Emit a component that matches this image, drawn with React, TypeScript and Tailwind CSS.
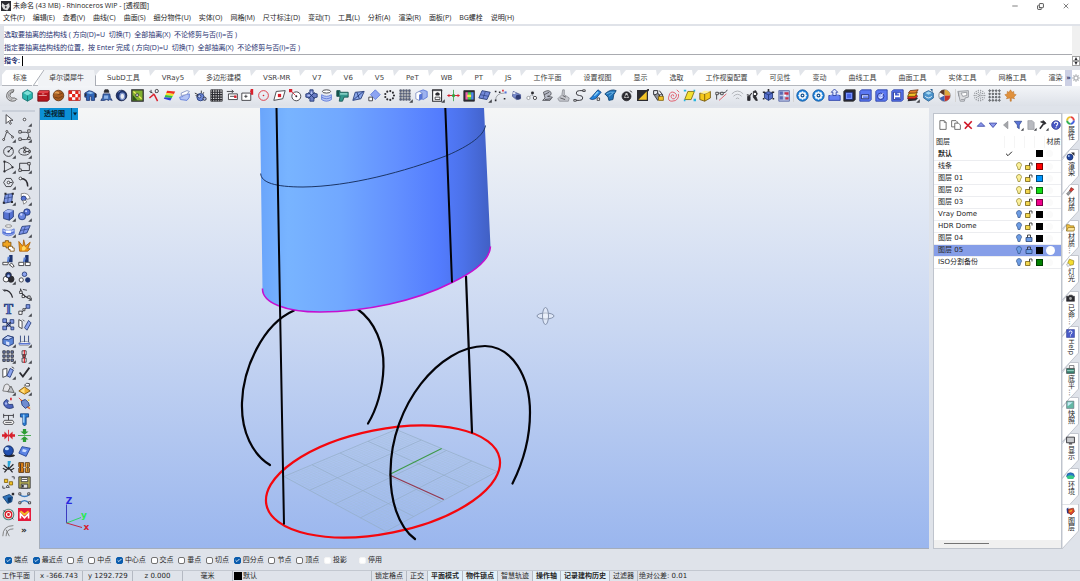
import { useState } from 'react';
import type { ReactNode } from 'react';
import { Check, Copy, Minus, X } from 'lucide-react';
import clsx from 'clsx';

// fill, stroke, path data, stroke width
type Shape = [string, string, string, number?];
type Glyph = { name: string; shapes: Shape[]; more?: boolean };

const N = 'none';
const K = '#2b2b30';
const G = '#8d9096';
const B = '#5674d6';
const L = '#b4c4f5';
const D = '#1d3470';
const R = '#d8202c';
const Y = '#f2c327';
const W = '#ffffff';

const c = (x: number, y: number, r: number) =>
  `M${x - r} ${y}a${r} ${r} 0 1 0 ${r * 2} 0a${r} ${r} 0 1 0 ${-r * 2} 0z`;

const e = (x: number, y: number, rx: number, ry: number) =>
  `M${x - rx} ${y}a${rx} ${ry} 0 1 0 ${rx * 2} 0a${rx} ${ry} 0 1 0 ${-rx * 2} 0z`;

const sq = (x: number, y: number, s: number) => `M${x} ${y}h${s}v${s}h${-s}z`;

const dots = (n: number, start: number, step: number, s: number) => {
  let d = '';
  for (let i = 0; i < n; i++)
    for (let j = 0; j < n; j++) d += sq(start + i * step, start + j * step, s);
  return d;
};

const ring = (n: number, r: number, s: number) => {
  let d = '';
  for (let i = 0; i < n; i++) {
    const a = (i * 2 * Math.PI) / n;
    d += c(8 + r * Math.cos(a), 8 + r * Math.sin(a), s);
  }
  return d;
};

const mainTools: Glyph[] = [
  { name: 'Sweep', shapes: [['#d4d5d8', '#666', 'M11 1C1 0-2 14 9 15q4 0 5-2l-2-2q-5 1-6-3 0-4 4-4z', 1.2], [N, '#888', 'M10 3C3 3 2 12 9 13M13 11l2 2']] },
  { name: 'Polyhedron', shapes: [['#2bb5ad', '#14706e', 'M8 1l6 3.5v7L8 15l-6-3.5v-7z'], ['#7fe0d8', N, 'M8 2l5 3-5 3-5-3z'], [N, '#14706e', 'M8 8v7']] },
  { name: 'Toolbox', shapes: [['#b5141c', '#6d0c12', 'M1 5l2-3h12v11l-2 2H1z'], ['#e04048', N, 'M1 5l2-3h12l-2 3z'], [N, '#f0b0b0', 'M2 8h10M6 6h3']] },
  { name: 'Wood sphere', shapes: [['#a85a1e', '#5e3210', c(8, 8, 6.5)], ['#e09a50', N, e(6, 5, 3, 2)], [N, '#6e3c14', 'M3 10q5 3 10-1M4 6q5 2 9-1']] },
  { name: 'Checker', shapes: [[W, '#991111', 'M1 2h14v12H1z'], ['#e02418', N, 'M1 2h4v4H1zM9 2h4v4H9zM5 6h4v4H5zM12 6h3v4h-3zM1 10h4v4H1zM9 10h4v4H9z']] },
  { name: 'Folded block', shapes: [['#2f66b8', D, 'M1 5l5-3 4 1 5 3v4h-2v4H9V9H7v5H3v-4H1z'], ['#8fc0ee', N, 'M3 5l4-2 5 2-4 1z'], [K, N, 'M1 6l2-1v4H1zM13 5l2 1v4h-2z']] },
  { name: 'Drape', shapes: [['#3c6cb4', D, 'M1 14q3-3 3-8h8q0 5 3 8l-3-1-1 1-3-1-3 1z'], [K, K, 'M6 1h4l1 3H5z'], ['#8fb4e8', N, 'M5 8h5v4H5z']] },
  { name: 'Torus', shapes: [[D, '#101a40', e(8, 8, 6.5, 6.5)], ['#e8ecf4', '#7a90c8', e(9, 9, 3, 4), 1.5], [N, '#8098d0', 'M4 4l3-2']] },
  { name: 'Picture curve', shapes: [['#80b030', K, sq(1, 1, 14), 1.5], ['#2e5518', N, 'M2 14V7l6 7z'], [N, '#f2ec60', 'M3 3l10 9', 1.5], ['#fff', K, 'M6 6h3v3H6z']] },
  { name: 'Cut curve', shapes: [[N, R, 'M9 6l-6 5M9 7l4 8', 1.8], [N, K, c(12, 2.5, 2)], [N, K, 'M5 1v4M3 3l4 2M10 5l1-1']] },
  { name: 'Curvature map', shapes: [['#f03020', N, 'M5 2l10 1-1.5 3L4 5z'], ['#f5e028', N, 'M4 5l9.5 1-1.3 2.5L3 7.5z'], ['#30c040', N, 'M3 7.5l9 1-1.3 2.5L2 10z'], ['#3040d8', N, 'M2 10l8.800 1L9 14 1 12z']] },
  { name: 'Surface offset', shapes: [[L, B, 'M2 10q5 0 6-3l6-1q1 5-3 8l-8-1z'], [W, '#7b8bc0', 'M4 5l7-3 3 1-4 4-6 1z']] },
  { name: 'Gears', shapes: [['#6e88d8', D, c(8, 10, 4.5)], ['#bfcdf5', D, c(6.5, 9, 2)], [N, K, 'M1 5l4 2M2 8l3 1M9 2v3M12 4l-1 2', 1.1], ['#9fb0e8', K, c(13, 12, 2)]] },
  { name: 'Weave', shapes: [['#e0e0e0', K, sq(1, 1, 14)], [N, K, 'M1 4h14M1 7h14M1 10h14M1 13h14M3 1v14M6 1v14M9 1v14M12 1v14', 1.4]] },
  { name: 'Unroll', shapes: [[W, K, 'M3 6h11v7H3z'], [N, K, 'M5 9h7M1 3h8M7 1l2 2-2 2'], [R, N, sq(10, 8, 3)]] },
  { name: 'Corner', shapes: [[W, K, 'M1 5h11v9H1z'], [R, N, 'M12 0h3v7h-3V4h-1z'], [N, K, 'M4 9h4M6 7v4']] },
  { name: 'Circle points', shapes: [[N, R, c(8, 8, 6), 1], [R, N, c(8, 8, 1)]] },
  { name: 'Diamond point', shapes: [[W, K, 'M4 3l11-1-3 10-11 2z'], [R, N, sq(6, 6, 4)]] },
  { name: 'Tangent circle', shapes: [[W, K, c(9, 9, 5.5)], [N, R, 'M2 2l6 6'], [R, N, sq(0, 0, 4)], [K, N, c(9, 9, 1.2)]] },
  { name: 'Cross solid', shapes: [['#6a7cc4', D, 'M6 1h4v4l5 1v4l-4 1v4H6v-4l-5-1V6l5-1z'], [L, N, 'M7 3h2v3H7zM3 7h3v2H3z'], [N, D, 'M4 4l8 8M12 4l-8 8']] },
  { name: 'Ring stack', shapes: [[W, K, e(8, 3, 5, 2)], [L, B, 'M2 7v6q6 4 12 0V7q-6 4-12 0z'], [N, B, 'M2 10q6 4 12 0']] },
  { name: 'Pipe', shapes: [['#33978e', '#14504c', 'M1 2h4v2h10v6h-5l-2 5H4l1-6H1z'], ['#86d0c6', N, 'M5 5h9v2H5z'], ['#14504c', N, 'M1 2h3v7H1z']] },
  { name: 'Plane line', shapes: [['#8ba8ec', D, 'M4 4l11-1-4 9-10 2z'], [N, D, 'M2 13L14 3M6 4l3 8']] },
  { name: 'Rotate plane', shapes: [['#8ca4f2', B, 'M9 1l6 6-6 6-6-6z'], [W, K, sq(1, 10, 4.5)]] },
  { name: 'Polar array', shapes: [[K, N, ring(9, 5.5, 1.3)]] },
  { name: 'Rect array', shapes: [['#7185bd', K, dots(4, 1, 3.6, 2), 0.7]], more: true },
  { name: 'Boxes', shapes: [['#9db2f0', B, 'M5 3l5-2 5 2v7l-5 3-5-3z'], [W, '#7c8cc0', 'M1 5l4-2 4 2v7l-4 2-4-2z'], [B, N, 'M5 7l4-2v7l-4 2z']] },
];

const solidTools: Glyph[] = [
  { name: 'Figure', shapes: [[W, K, 'M2 1h11v14H2z', 1.3], [K, N, 'M5 6q3-4 6 0l-1 2H6z'], [N, K, 'M5 10h6v3H5zM1 2h13']], more: true },
  { name: 'Gumball', shapes: [[N, '#30a040', 'M8 1v14'], [N, R, 'M1 8h14', 1.3], [R, N, 'M0 8l3-2v4zM16 8l-3-2v4z'], ['#30a040', N, c(8, 8, 2)]] },
  { name: 'Environment map', shapes: [[K, K, sq(1, 2, 13)], ['#f060b0', N, 'M3 4h3v9H3z'], ['#44d050', N, 'M6 4h4v9H6z'], ['#5088f0', N, 'M10 4h3v9h-3z'], ['#f5e050', N, 'M5 7h5v3H5z']] },
  { name: 'Mesh plane', shapes: [['#7389d8', D, 'M5 2l10 2-4 9-10-2z'], [N, D, 'M3 7l10 2M9 3l-3 9', 0.7]], more: true },
  { name: 'Curve points', shapes: [[N, G, 'M2 14q0-9 11-9'], [K, N, 'M1 2h2v2H1zM6 3h2v2H6zM1 13h2v2H1zM12 11h2v2h-2z'], [R, N, sq(10, 1, 2)], [B, N, sq(13, 3, 2.5)]] },
  { name: 'Capsule', shapes: [['#7789ca', '#4a5890', 'M4 3l9 4v5l-5 1-5-4z'], ['#303c74', N, c(10, 10, 3)], [W, N, e(5, 5, 2, 1)]] },
  { name: 'Nodes', shapes: [[N, G, 'M2 12l5-5 6 5'], [W, K, c(11, 11, 2)], [W, G, c(3, 11, 2)], [K, N, c(8, 5, 1.8)]] },
  { name: 'Flow', shapes: [['#b8bcc8', K, 'M3 4q7-4 9 0t-4 5l6 1-3 4H2l3-3z', 0.8], [N, K, 'M4 7l6-3M5 13l7-1', 0.8]] },
  { name: 'Robot', shapes: [['#c4c6cc', G, 'M7 1h2v6l6 4-1 4H3l-2-3 5-5z'], [N, K, 'M4 11l6 2M7 8l4 2', 0.8]] },
  { name: 'S curve', shapes: [[N, K, 'M14 2H8q-4 0-4 3t4 3t4 3t-4 3H2', 1.1], [W, K, 'M12 1h3v2h-3zM1 13h3v2H1z']] },
  { name: 'Brush', shapes: [['#2382dc', '#0b3d7a', 'M11 1l4 3-7 8-4 1-3-1 3-3z'], ['#8ad0f8', N, 'M10 3l2 1-5 5-1-1z'], [W, K, sq(10, 11, 3)]] },
  { name: 'Leaf', shapes: [['#2173b8', '#0d3f6e', 'M1 6q8-7 14-4l-3 5-1 6-5 1-1-4z'], [N, '#7cc0ec', 'M3 6q5-3 10-2M6 9l5-4']] },
  { name: 'Record', shapes: [[K, K, c(8, 9, 5.5)], ['#c8c8c8', N, 'M7 5h2l2 6H5z'], [K, N, c(8, 9, 1.5)], [N, K, 'M12 2l3 2']] },
  { name: 'Contrast', shapes: [[Y, K, sq(2, 2, 12), 1.5], [K, N, 'M2 2h12L2 14z'], [K, N, 'M13 0h3v3z']] },
  { name: 'Locks', shapes: [[N, K, 'M2 2h5v5H2zM9 2l4 5', 1.2], [G, K, 'M3 8l4-3 3 4-3 5z'], [Y, '#80600a', 'M8 9h6v5H8z'], [N, K, 'M9 9V7h4v2']] },
  { name: 'Spiral', shapes: [[N, '#e04858', 'M8 9q1-2-1-2t-2 2 2 3 4-2-1-5-5-1-3 6 4 5 7-3 1-6'], [N, '#e04858', 'M12 1l3 3']] },
  { name: 'Yellow plane', shapes: [['#f4e030', '#77650a', 'M6 3h8l-4 10H2z'], ['#28b4dc', N, 'M1 1h3v2H1zM13 12h3v3h-3zM1 13h2v2H1zM13 1h2v2h-2z']] },
  { name: 'Yellow box', shapes: [['#f4c81c', '#6b4f08', 'M1 5l6 1 7-3v8l-7 4-6-2z'], ['#fff3a0', N, 'M1 5l6-3 7 1-7 3z'], [N, '#6b4f08', 'M7 6v9']] },
  { name: 'Blend', shapes: [[N, K, 'M2 13V5h5q7 0 8-4'], [W, K, 'M1 4h3v3H1zM7 4h3v3H7z'], [N, R, 'M5 14L14 6', 0.8]] },
  { name: 'Waves', shapes: [[N, '#b0b3b8', 'M1 6q7-7 14 0M3 9q5-5 10 0M6 12q2-2 4 0', 1.2]] },
  { name: 'People', shapes: [[K, K, 'M2 9h3v5H2zM9 3l3-1 2 4-2 3 2 5h-2l-3-4z'], [W, N, c(11, 6, 1.5)], [N, K, 'M1 7l4 1 2-3', 1.3]] },
  { name: 'Cube frame', shapes: [['#5871cc', D, 'M3 5l5-2 5 2v6l-5 3-5-3z'], [N, D, 'M8 7v7M3 5l5 2 5-2'], [K, N, 'M1 3h3v2H1zM12 3h3v2h-3zM7 0h2v3H7zM1 11h2v2H1zM13 11h2v2h-2z']] },
  { name: 'Pattern', shapes: [['#b8c2e4', '#5060a0', sq(1, 2, 13)], ['#5a6cb4', N, 'M2 3h4v4H2zM2 9h4v4H2z'], ['#c83048', N, 'M8 4h5v3H8zM9 10h4v3H9z'], [W, N, 'M7 7h3v2H7z']] },
];

const gear: Shape[] = [['#1e86e0', '#0c4d94', c(8, 8, 7)], [W, N, ring(8, 4, 1.3)], [W, N, c(8, 8, 4)], ['#14508c', N, c(8, 8, 2.5)], [W, N, c(8, 8, 1)]];
const pad: Shape = ['#5b78f2', '#2339a0', 'M1 3l2-2h12v12l-2 2H1z'];

const panelTools: Glyph[] = [
  { name: 'Settings A', shapes: gear },
  { name: 'Settings B', shapes: gear },
  { name: 'Extrude', shapes: [['#6480f4', '#2339a0', 'M1 8h14v6H1z'], ['#a8bcff', N, 'M2 8l3-2h9l-1 2z'], ['#dfe8ff', '#2339a0', 'M8 0l4 4h-2v4H6V4H4z']] },
  { name: 'Frame', shapes: [[K, K, 'M1 3l2-2h12v12l-2 2H1z'], ['#7c96ff', '#101c60', sq(3, 4, 9)], ['#4763e4', N, sq(5, 6, 5)]] },
  { name: 'Slot', shapes: [pad, ['#c9d6ff', '#16205c', 'M3 7h9v5H3z'], ['#5b78f2', N, 'M5 9h6v2H5z']] },
  { name: 'Revolve hole', shapes: [pad, ['#93a8ff', '#1a2a80', c(7, 9, 4)], [N, W, 'M7 9l3-4M5 10q2 2 4 0']] },
  { name: 'Save block', shapes: [pad, [W, '#1a2a80', 'M3 4h9v9H3z'], ['#3d58cc', N, 'M5 4h5v4H5zM5 10h6v3H5z'], [W, N, sq(8, 5, 1.5)]] },
  { name: 'Layers stack', shapes: [[K, N, 'M3 11l9-1 3 1-3 3-10 1z'], ['#e03020', '#6a1010', 'M3 8l10-1 1 2-3 3H2z'], [Y, '#6b4f08', 'M4 5l10-1-3 5H2z'], ['#e8802a', '#6a3010', 'M5 2l10-1-3 4H3z']], more: true },
  { name: 'Hexagon', shapes: [['#4c94cc', '#2b6090', 'M8 2l6 3v6l-6 4-6-4V5z'], ['#a4d8f4', N, 'M8 3l4 2-4 2-4-2z'], [N, W, 'M4 9q4 4 8 0'], ['#2b6090', N, 'M10 0h3v4z']] },
  { name: 'Color wheel', shapes: [['#f2f2f6', '#777', c(8, 8, 7)], ['#e0a63a', N, 'M8 8V1a7 7 0 0 1 7 7z'], ['#c8322a', N, 'M8 8h7a7 7 0 0 1-7 7z'], ['#3f62b4', N, 'M8 8v7a7 7 0 0 1-6-4z'], ['#5c3424', N, 'M8 8L2 4a7 7 0 0 1 6-3z']] },
];

const extraTools: Glyph[] = [
  { name: 'Monitor', shapes: [['#dcdde0', G, 'M1 3l13-1v8l-4 1-1 4H4l-1-4z'], [W, G, 'M5 5l7-1v4l-5 1z'], [N, G, 'M2 4v5M5 13h4']] },
  { name: 'Halftone', shapes: [['#8a8d92', N, ring(14, 6.5, 0.8) + ring(10, 4.3, 0.8) + ring(5, 2, 0.8) + c(8, 8, 0.7)]] },
  { name: 'Dot grid', shapes: [['#aaa', '#44474c', c(2, 2, 1) + c(6, 2, 1) + c(10, 2, 1) + c(14, 2, 1) + c(2, 6, 1) + c(6, 6, 1) + c(10, 6, 1) + c(14, 6, 1) + c(2, 10, 1) + c(6, 10, 1) + c(10, 10, 1) + c(14, 10, 1) + c(2, 14, 1) + c(6, 14, 1) + c(10, 14, 1) + c(14, 14, 1)]] },
  { name: 'Maple', shapes: [['#e0913c', '#b8691c', 'M8 1l2 3 2-1v3l3 1-3 3 1 2-4-1v4H7.500v-4L3 12l1-2-3-3 3-1V3l2 1z', 0.6]] },
];

const sideTools: Glyph[] = [
  { name: 'Select', shapes: [[W, K, 'M5 2v11l3-3 2 4 1.500-1-2-4h4z']] },
  { name: 'Point', shapes: [[W, K, c(8, 8, 1.6)]], more: true },
  { name: 'Polyline', shapes: [[N, K, 'M2 14L6 3l8 7'], [W, K, c(2, 13, 1.2) + c(6, 3, 1.2) + c(13, 10, 1.2)]], more: true },
  { name: 'Control curve', shapes: [[N, K, 'M3 4h6q5 0 4 5t-4 4H4'], [W, K, sq(1, 2, 3) + sq(12, 1, 3) + sq(1, 11, 3) + sq(12, 10, 3)]], more: true },
  { name: 'Circle', shapes: [[N, K, c(8, 8, 6)], [N, K, 'M8 8l4-4'], [K, N, c(8, 8, 1.3) + c(12, 4, 1.3)]], more: true },
  { name: 'Ellipse', shapes: [[N, K, e(8, 8, 7, 4.5)], [N, K, 'M8 4v4h6'], [W, K, sq(7, 2.5, 2.5) + sq(7, 7, 2.5) + sq(13, 7, 2)]], more: true },
  { name: 'Arc', shapes: [[N, K, 'M3 2v12l10-5Q10 3 3 2'], [K, N, c(3, 2, 1.4) + c(3, 14, 1.4) + c(13, 9, 1.4)]], more: true },
  { name: 'Rectangle', shapes: [[N, K, 'M2 4h12v9H2z', 1.1], [W, K, sq(1, 11, 3) + sq(12, 3, 3)]], more: true },
  { name: 'Polygon', shapes: [[N, K, 'M5 3h6l3 5-3 5H5L2 8z'], [N, K, 'M8 8h5'], [W, K, c(8, 8, 1.6)]], more: true },
  { name: 'Fillet', shapes: [[N, K, 'M3 3q9 0 9 10', 1.8], [W, K, c(3, 3, 1.7)]], more: true },
  { name: 'Surface points', shapes: [['#7e96e4', D, 'M4 3l9-1-1 10-10 2z'], [N, D, 'M3 8l10-2M8 3l-1 10', 0.7], [K, N, sq(3, 1, 2.5) + sq(12, 1, 2.5) + sq(1, 12, 2.5) + sq(11, 11, 2.5)]], more: true },
  { name: 'Surface edges', shapes: [[W, '#777', 'M4 2q9-2 11 6l-4 1Q9 5 4 6z'], [B, D, c(7, 8, 3)], [W, '#777', 'M6 10q4 0 5 2l-4 3z']], more: true },
  { name: 'Box', shapes: [['#5672d2', D, 'M2 5l5-3 7 1v8l-5 4-7-2z'], ['#a8bcf8', N, 'M2 5l5-3 7 1-5 3z'], [N, D, 'M9 6v9']], more: true },
  { name: 'Spheres', shapes: [['#4f6cd0', D, c(11, 5, 4)], ['#6a86e0', D, c(5, 10, 4.5)], ['#c6d2ff', N, c(4, 8, 1.5) + c(10, 4, 1.3)]], more: true },
  { name: 'Cylinder', shapes: [[W, '#777', e(8, 2.5, 4, 1.5)], [L, B, 'M1 6q7 4 14 0v6q-7 5-14 0z'], [B, N, 'M1 9q7 3 14 0v2q-7 4-14 0z'], [W, N, 'M5 8h6v3H5z']], more: true },
  { name: 'Patch', shapes: [['#7c94ea', D, 'M5 3l10-1-4 9-10 2z'], [N, D, 'M3 8l10-2M9 3l-3 9', 0.7]], more: true },
  { name: 'Join', shapes: [['#f0a420', '#80500a', 'M1 4h3V2h4v2h3v5H8v2H5V9H1z'], [W, '#80500a', 'M8 9h5v2h2v4h-5v-2H8z']] },
  { name: 'Explode', shapes: [['#f09a14', '#a85c08', 'M1 3l5 6 1-8 2 8 6-5-3 8h3l-3 3H2z'], ['#ffd860', N, 'M5 10l2-2 3 3-2 3H5z']] },
  { name: 'Trim', shapes: [[D, N, 'M9 0h4v9H8z'], ['#5a82d8', N, 'M7 2h3L8 9H6z'], [W, K, 'M1 9h7l-1 3H1zM9 12l3-2 3 4-2 1z']] },
  { name: 'Split', shapes: [[D, N, 'M9 0h4v9H8z'], ['#5a82d8', N, 'M7 3h3L8 9H6z'], [W, K, 'M1 9h6v4H1zM9 9h6v4H9z']] },
  { name: 'Union', shapes: [[W, K, c(5, 10, 3.5)], [K, K, c(11, 10, 3.8)], [D, K, c(8, 5, 3.5)], ['#a8bcf8', N, c(8, 6, 1.6)], [W, N, c(6, 10, 1.5)]], more: true },
  { name: 'Group', shapes: [['#8ca4f0', D, c(8, 4, 2.8)], [W, K, c(4, 11, 2.6)], [D, D, c(12, 11, 2.8)]] },
  { name: 'Arc blend', shapes: [[N, K, 'M2 4q8-1 11 9', 1.6], [N, K, 'M1 3l3 3']] },
  { name: 'Edit points', shapes: [[N, K, 'M3 2q1 9 11 12', 1.4], [W, K, sq(2, 5, 3) + sq(5, 10, 3) + sq(12, 11, 3)], [N, K, 'M6 3l5 1']], more: true },
  { name: 'Text', shapes: [] },
  { name: 'Scale', shapes: [[N, K, 'M4 12l8-8'], [W, K, sq(1, 10, 4) + sq(6, 7, 2.5)], ['#7e96e4', D, sq(10, 2, 4.5)]], more: true },
  { name: 'Blocks', shapes: [['#7e96e4', D, sq(1, 1, 4.5) + sq(10, 2, 4.5) + sq(6, 6, 4) + sq(1, 10, 4.5) + sq(11, 11, 3.5)], [N, K, 'M5 5l6 6M11 5l-6 6']] },
  { name: 'Mirror', shapes: [[W, K, 'M1 2l4 2v9l-4-2z'], ['#8ca4f0', D, 'M8 12l5-9 3 3-5 9z'], [N, K, 'M6 2l2 2']] },
  { name: 'Shell', shapes: [['#5b86d8', D, 'M1 6l6-4 7 2v8l-6 3-7-3z'], ['#c5d6fb', D, 'M1 6l6-4 7 2-6 3z'], ['#d8e2fc', N, 'M5 9l4 1v4l-4-1z']], more: true },
  { name: 'Project', shapes: [[W, G, 'M1 11q7-4 14 0l-2 3H2z'], [N, D, 'M3 2v8M8 2v8M13 2v8'], ['#5b76d0', N, 'M1 11h14v2H1z']], more: true },
  { name: 'Array', shapes: [['#7185bd', K, sq(1, 1, 3) + sq(6, 1, 3) + sq(11, 1, 3) + sq(1, 6, 3) + sq(6, 6, 3) + sq(11, 6, 3) + sq(1, 11, 3) + sq(6, 11, 3) + sq(11, 11, 3)]], more: true },
  { name: 'Align', shapes: [[W, K, sq(5, 1, 5) + sq(5, 10, 5)], [R, N, 'M7 0h1.500v16H7z'], ['#d85050', K, sq(6, 6, 3)]], more: true },
  { name: 'Rotate', shapes: [[W, K, 'M1 4l5-1v9l-5 2z'], ['#8ca4f0', D, 'M6 12l4-9 4 2-4 9z'], [N, K, 'M12 1l3 2']], more: true },
  { name: 'Check', shapes: [[N, K, 'M2 8l4 5L14 2', 2.2]], more: true },
  { name: 'Boolean shapes', shapes: [['#e4e4e8', '#666', 'M1 11l2-7q5-4 7 3l-1 5z'], ['#bfc2c8', '#555', 'M7 12l4-7 4 8z']], more: true },
  { name: 'Pyramid', shapes: [['#f0b030', '#7a5408', 'M1 11l7-5 7 5-7 4z'], ['#ffe080', N, 'M3 11l5-4v7z'], [W, K, 'M8 4q2-4 6-2v3h-4z']], more: true },
  { name: 'Bend', shapes: [['#4c64bc', D, 'M6 3Q0 6 3 11q4 5 11 2l-1-4q-5 1-6-1-1-2 1-3z'], ['#a8b8f0', N, c(5, 8, 1.5)], [R, N, 'M10 1h2v3h-2z']] },
  { name: 'Cage edit', shapes: [['#6f8cd0', D, 'M4 5l5-2 4 4 1 4-5 3-4-4z'], ['#e8c840', N, 'M3 3h2v2H3zM12 12h3v2h-3zM12 3h2v2h-2z'], [N, R, 'M1 1l4 4M11 12l4 3']] },
  { name: 'Dimension', shapes: [[N, K, 'M2 1v5M14 1v5M2 3h12M8 3v6'], [W, K, 'M3 9h10q3 2.500 0 5H3q-3-2.500 0-5z'], [N, K, 'M4 11.500h8']] },
  { name: 'Bolt', shapes: [['#2a7cd4', '#0c3c7c', 'M3 1h10v4h-3v9l-2 2-2-2V5H3z'], ['#98ccf8', N, 'M6 2h2v10H6z']] },
  { name: 'Compress', shapes: [[R, N, 'M0 6.500h3V3l5 5-5 5V9.500H0zM16 6.500h-3V3L8 8l5 5V9.500h3z'], [N, R, 'M8 1v14', 1]] },
  { name: 'Compress vertical', shapes: [['#2c9c34', N, 'M6 0h4v3h3L8 7 3 3h3zM6 16h4v-3h3L8 9l-5 4h3z'], [N, '#2c9c34', 'M0 8h16', 1]] },
  { name: 'Render ball', shapes: [[K, N, e(9, 13, 7, 2)], ['#2250b0', '#0b2050', c(8, 7, 6)], ['#c0dcff', N, e(6, 4.5, 2.5, 2)]] },
  { name: 'Deform plane', shapes: [['#5c84e4', '#1c3c90', 'M5 2l10 2-5 10-9-4z'], ['#cfe0ff', N, 'M6 5l5 1-2 3-4-1z']] },
  { name: 'Snip', shapes: [['#28a4d8', N, 'M7 0h4l-2 8H7z'], [N, K, 'M2 5l6 5 6-6M3 14l5-6 5 6M1 9l4 2M15 9l-4 2', 1.5]] },
  { name: 'Books', shapes: [['#d87c14', '#4a2804', 'M1 2h6v5l-1 1 1 1v5H1V9l1-1-1-1z'], ['#f0a83c', '#4a2804', 'M9 2h5v5l-1 1 1 1v5H9V9l1-1-1-1z'], [N, K, 'M3 3v10M12 3v10']] },
  { name: 'Order', shapes: [[Y, '#80600a', sq(3, 4, 4) + sq(9, 7, 4)], [W, K, 'M5 14l2-3 2 3z'], [N, K, 'M12 1h3v3M1 12v3h3']] },
  { name: 'Save', shapes: [['#b4ac54', K, sq(1, 1, 14)], [W, K, 'M4 2h8v5H4z'], ['#dedede', K, 'M4 10h8v5H4z'], [K, N, 'M5 11h2v3H5zM5 4h6v1H5z']] },
  { name: 'Hull', shapes: [['#3074bc', '#0f3a6c', 'M1 6l8-3 4 3-1 6-5 2z'], ['#0f3a6c', N, 'M7 7l5-1-1 6-4 1z'], [K, N, sq(12, 1, 3)]] },
  { name: 'Four curves', shapes: [[N, '#3c7cc0', 'M2 3q6 5 12 0M2 14q6-7 12 0', 1.6], [W, K, sq(1, 1, 2.5) + sq(12, 1, 2.5) + sq(1, 12, 2.5) + sq(13, 12, 2.5)]] },
  { name: 'Target', shapes: [[W, '#5b8a86', c(8, 8, 6.5), 1.4], [N, R, c(8, 8, 4), 1.8], [R, N, c(8, 8, 1.8)], [N, K, 'M2 3l2 2M12 12l2 2']] },
  { name: 'Plugin', shapes: [['#e41c3c', N, sq(0, 0, 16)], [N, Y, 'M3 4l5 4 5-4', 2.2], [N, W, 'M3 13V7l5 5 5-5v6', 2]] },
  { name: 'Offsets', shapes: [[N, '#777', 'M1 15Q1 2 14 2M5 15Q5 6 14 6M9 15l-4-8', 1.1]] },
];

const layerTools: Glyph[] = [
  { name: 'New layer', shapes: [[W, '#555', 'M3 1h7l3 3v11H3z', 1.3], [N, '#555', 'M10 1v3h3']] },
  { name: 'New sublayer', shapes: [[W, '#555', 'M1 1h7l2 2v8H1z', 1.3], [W, '#555', 'M6 5h6l3 3v7H6z', 1.3]] },
  { name: 'Delete', shapes: [[N, '#d01828', 'M2 3l12 11M14 2L3 14', 2.6]] },
  { name: 'Move up', shapes: [['#8c98ec', '#3c48a8', 'M8 4l6 6H2z', 1.4]] },
  { name: 'Move down', shapes: [['#8c98ec', '#3c48a8', 'M8 12L2 5h12z', 1.4]] },
  { name: 'Parent', shapes: [['#a4a6aa', '#8a8c90', 'M11 2v12L4 8z']] },
  { name: 'Filter', shapes: [['#5a74d8', '#22387c', 'M2 2h12l-4 6v6l-3-2V8z']], more: true },
  { name: 'Report', shapes: [['#b8bac0', G, 'M3 1h7l3 3v11H3z']], more: true },
  { name: 'Tools', shapes: [[K, K, 'M4 3l5-2 4 4-2 2-3-2z'], [N, K, 'M9 6l-6 8', 2.5]], more: true },
  { name: 'Help', shapes: [['#4858c4', '#262f80', c(8, 8, 7)], [N, W, 'M5.500 6q0-3 3-2.500t2 3T8 10M8 11.500v1.500', 1.7]] },
];

const menus = ['文件(F)', '编辑(E)', '查看(V)', '曲线(C)', '曲面(S)', '细分物件(U)', '实体(O)', '网格(M)', '尺寸标注(D)', '变动(T)', '工具(L)', '分析(A)', '渲染(R)', '面板(P)', 'BG螺栓', '说明(H)'];

const toolTabs = ['标准', '卓尔谟犀牛', 'SubD工具', 'VRay5', '多边形建模', 'VSR-MR', 'V7', 'V6', 'V5', 'PeT', 'WB', 'PT', 'JS', '工作平面', '设置视图', '显示', '选取', '工作视窗配置', '可见性', '变动', '曲线工具', '曲面工具', '实体工具', '网格工具', '渲染'];

const layers = [
  { name: '默认', color: '#000000', current: true },
  { name: '线条', color: '#ff0000', on: true },
  { name: '图层 01', color: '#0096ff', on: true },
  { name: '图层 02', color: '#14dc14', on: true },
  { name: '图层 03', color: '#f0008c', on: true },
  { name: 'Vray Dome', color: '#000000' },
  { name: 'HDR Dome', color: '#000000' },
  { name: '图层 04', color: '#000000', locked: true },
  { name: '图层 05', color: '#000000', locked: true, selected: true },
  { name: 'ISO分割备份', color: '#008000' },
];

const sideTabs: { name: string; shapes: Shape[] }[] = [
  { name: '属性', shapes: [[N, '#e84040', 'M8 2a6 6 0 0 1 6 6', 3.5], [N, '#4060e0', 'M14 8a6 6 0 0 1-6 6', 3.5], [N, '#30b050', 'M8 14a6 6 0 0 1-6-6', 3.5], [N, '#e8c030', 'M2 8a6 6 0 0 1 6-6', 3.5]] },
  { name: '渲染', shapes: [['#2448a0', '#0c1c50', c(7, 9, 5.5)], ['#a8c4f8', N, c(5, 7, 1.8)], [K, N, 'M9 1h6v6z']] },
  { name: '材质', shapes: [['#d83a34', '#701814', 'M9 1l5 3-5 5-3-2z'], ['#9a9ca0', '#555', 'M1 12l5-5 3 2-5 6z']] },
  { name: '材质…', shapes: [['#f0c040', '#80600a', 'M1 3h5l1 2h7v9H1z'], ['#fbe49a', '#80600a', 'M1 14l3-6h12l-2 6z']] },
  { name: '灯光', shapes: [['#f4dc30', '#7c6c08', 'M6 2l8 3-1 7-6 1-4-4z'], [W, G, 'M1 11l4-1 2 3-4 2z']] },
  { name: '已命…', shapes: [[K, K, 'M1 4h4l1-2h5l1 2h3v9H1z'], ['#aaa', N, c(8, 8, 2.5)]] },
  { name: 'Help', shapes: [['#4a5cc8', '#2c3890', sq(1, 1, 14)], [N, W, 'M5.500 6q0-3 3-2.500t2 3T8 10M8 11.500v1.500', 1.7]] },
  { name: '底平…', shapes: [['#388070', K, 'M1 6h14v9H1z'], [W, K, 'M6 1h8v5H6z'], ['#9cd0c4', N, 'M2 9h12v2H2z']] },
  { name: '快照', shapes: [['#64b8a4', '#667', sq(1, 2, 13)], ['#c8ecf8', N, 'M3 4h9l-9 7z']] },
  { name: '显示', shapes: [['#c8cacd', K, 'M1 2h14v10H1z', 1.5], [K, N, 'M5 13h6v2H5z']] },
  { name: '环境', shapes: [['#2878c8', '#1a5088', 'M1 10a7 7 0 0 1 14 0z'], ['#38c888', N, 'M1 10q7-5 14 0l-2 4H3z']] },
  { name: '图层', shapes: [['#283c90', N, 'M1 3l3-2 1 11-3-1z'], ['#e04828', '#5c1410', 'M4 4l9-2 2 6-6 6-5-4z'], [Y, N, 'M6 7l5-2-1 3-4 1z']] },
];

const osnaps = [
  { name: '端点', on: true }, { name: '最近点', on: true }, { name: '点' }, { name: '中点' },
  { name: '中心点', on: true }, { name: '交点' }, { name: '垂点' }, { name: '切点' },
  { name: '四分点', on: true }, { name: '节点' }, { name: '顶点' }, { name: '投影', plain: true },
];

const toggles = [
  { name: '锁定格点' }, { name: '正交' }, { name: '平面模式', on: true }, { name: '物件锁点', on: true },
  { name: '智慧轨迹' }, { name: '操作轴', on: true }, { name: '记录建构历史', on: true }, { name: '过滤器' },
];

const Icon = ({ shapes, className, children }: { shapes: Shape[]; className?: string; children?: ReactNode }) => (
  <svg viewBox="0 0 16 16" className={clsx('block shrink-0', className)} aria-hidden="true">
    {shapes.map(([fill, stroke, d, width = 1], i) => (
      <path key={i} d={d} fill={fill} stroke={stroke} strokeWidth={width} />
    ))}
    {children}
  </svg>
);

const ToolButton = ({ glyph, className }: { glyph: Glyph; className: string }) => (
  <button type="button" aria-label={glyph.name} className="block">
    <Icon shapes={glyph.shapes} className={clsx('overflow-visible', className)}>
      {glyph.more && <path d="M17 12.500V17h-4.500z" fill="#44464c" />}
      {glyph.name === 'Text' && (
        <text x="8" y="14" textAnchor="middle" fontSize="17" fontWeight="700" fill="#5b78d8" stroke="#1d3470" strokeWidth="0.8" className="font-['Liberation_Serif',serif]">T</text>
      )}
    </Icon>
  </button>
);

const ToolGroup = ({ glyphs, className }: { glyphs: Glyph[]; className: string }) => (
  <div className={clsx('flex shrink-0 items-center justify-between', className)}>
    {glyphs.map((g) => <ToolButton key={g.name} glyph={g} className="h-[13px] w-[13px]" />)}
  </div>
);

const TitleBar = () => (
  <header className="flex h-3 items-center bg-white pl-px font-['Open_Sans','Noto_Sans_CJK_SC',sans-serif] text-neutral-800">
    <Icon className="h-2.5 w-2.5" shapes={[[K, N, sq(0, 0, 16)], ['#ddd', N, 'M2 3l5 4 6-4 1 6-4 6-6-2-3-5z'], [K, N, 'M6 8l4 1-3 3z']]} />
    <h1 className="ml-0.5 flex-1">未命名 (43 MB) - Rhinoceros WIP - [透视图]</h1>
    <div className="flex items-center gap-[18px] pr-2.5 text-neutral-700">
      <button type="button" aria-label="Minimize"><Minus className="h-2 w-2" /></button>
      <button type="button" aria-label="Restore"><Copy className="h-[7px] w-[7px] -scale-x-100 rotate-180" strokeWidth={3} /></button>
      <button type="button" aria-label="Close"><X className="h-2 w-2" /></button>
    </div>
  </header>
);

const MenuBar = () => (
  <nav className="flex h-3 items-center gap-2 bg-white pl-[3px] font-['Open_Sans','Noto_Sans_CJK_SC',sans-serif] text-neutral-800">
    {menus.map((m) => <button key={m} type="button" className="whitespace-nowrap">{m}</button>)}
  </nav>
);

const CommandArea = () => (
  <section className="flex border-t-2 border-b-4 border-l-4 border-[#e0e3e9] bg-white font-['Open_Sans','Noto_Sans_CJK_SC',sans-serif]">
    <div className="flex-1">
      <div className="h-7 pt-0.5 text-[#26306f]">
        <p className="h-[13px] leading-[13px] whitespace-pre">选取要抽离的结构线 ( 方向(D)=U  切换(T)  全部抽离(X)  不论修剪与否(I)=否 )</p>
        <p className="h-[13px] leading-[13px] whitespace-pre">指定要抽离结构线的位置，按 Enter 完成 ( 方向(D)=U  切换(T)  全部抽离(X)  不论修剪与否(I)=否 )</p>
      </div>
      <div className="flex h-3 items-center border-t border-[#a9abb0]">
        <label htmlFor="command" className="font-semibold text-[#26306f]">指令:</label>
        <input id="command" className="ml-0.5 h-2.5 flex-1 border-l border-black outline-none" />
      </div>
    </div>
    <div className="flex w-2 flex-col justify-end bg-[#f0f0f0]">
      <button type="button" className="h-[5px] border border-neutral-400 bg-white" aria-label="Scroll up"><Icon className="mx-auto h-[3px] w-1" shapes={[[K, N, 'M8 0l8 16H0z']]} /></button>
      <button type="button" className="h-[5px] border border-neutral-400 bg-white" aria-label="Scroll down"><Icon className="mx-auto h-[3px] w-1" shapes={[[K, N, 'M8 16L0 0h16z']]} /></button>
    </div>
  </section>
);

const ToolTabs = () => {
  const [active, setActive] = useState('卓尔谟犀牛');
  return (
    <div className="flex h-4 border-l-2 border-[#e0e3e9] bg-white">
      <div className="flex min-w-0 flex-1 overflow-hidden">
        {toolTabs.map((t, i) => {
          const on = t === active;
          return (
            <button
              key={t}
              type="button"
              onClick={() => setActive(t)}
              className={clsx(
                'relative shrink-0 pl-[11px] whitespace-nowrap text-neutral-700',
                i < toolTabs.length - 1 && 'pr-[11px]',
                on ? 'border-r border-[#a9adb5] bg-[#f1f3f6]' : 'border-b border-[#b4b7bd]',
              )}
            >
              {on ? (
                <svg viewBox="0 0 13 16" className="absolute top-0 -left-1.5 h-4 w-[13px]">
                  <path d="M0 0h13L1 16H0z" fill="#fff" />
                  <path d="M1 16L12 0" stroke="#a9adb5" />
                </svg>
              ) : (
                <svg viewBox="0 0 6 6" className="absolute top-0 -left-0.5 h-1.5 w-1.5">
                  <path d="M0 0h6L1 6z" fill="#e2e5ea" />
                </svg>
              )}
              <span className="relative">{t}</span>
            </button>
          );
        })}
      </div>
      <button type="button" className="w-[7px] bg-[#ccd0e4] font-bold text-[#222a60]">»</button>
      <button type="button" aria-label="Tab options" className="w-2"><Icon className="mx-auto h-2 w-2" shapes={[[N, G, ring(8, 6, 1), 1], [N, G, c(8, 8, 4), 1.5]]} /></button>
    </div>
  );
};

const grid = () => {
  const at = (u: number, v: number) => {
    const x = 284 + 102 * u + 112 * v - u * v;
    const y = 477 + 55 * u - 47 * v - 13 * u * v;
    return `${x.toFixed(1)} ${y.toFixed(1)}`;
  };
  let major = '';
  let minor = '';
  for (let i = 0; i <= 40; i++) {
    const t = i / 40;
    const d = `M${at(t, 0)}L${at(t, 1)}M${at(0, t)}L${at(1, t)}`;
    if (i % 10 === 0) major += d;
    else minor += d;
  }
  return { major, minor };
};

const Scene = () => {
  const { major, minor } = grid();
  return (
    <svg viewBox="40 108 889 441" preserveAspectRatio="xMidYMid slice" className="block h-full w-full">
      <defs>
        <linearGradient id="sky" x2="0" y2="1">
          <stop offset="0" stopColor="#f5f6f6" />
          <stop offset="0.5" stopColor="#c9d7f2" />
          <stop offset="1" stopColor="#9ab6ee" />
        </linearGradient>
        <linearGradient id="body">
          <stop offset="0" stopColor="#6aa5fb" />
          <stop offset="0.12" stopColor="#78b4ff" />
          <stop offset="0.35" stopColor="#71a8ff" />
          <stop offset="0.6" stopColor="#628fff" />
          <stop offset="0.78" stopColor="#537cfe" />
          <stop offset="0.88" stopColor="#4c72ea" />
          <stop offset="1" stopColor="#4160c4" />
        </linearGradient>
      </defs>
      <path d="M40 108h889v441H40z" fill="url(#sky)" />
      <path d={minor} stroke="#a3bfd4" strokeWidth="0.25" />
      <path d={major} stroke="#93adc6" strokeWidth="0.7" />
      <path d="M389.500 475L441.700 449" stroke="#3f9a4a" strokeWidth="1.2" />
      <path d="M389.500 475.500L443.700 500" stroke="#93384f" strokeWidth="1.2" />
      <ellipse cx="383" cy="482" rx="118.900" ry="51.900" transform="rotate(-11.300 383 482)" fill="none" stroke="#f5070d" strokeWidth="2.2" />
      <g fill="none" stroke="#030308" strokeWidth="2.2" strokeLinecap="round">
        <path d="M294 311C262 325 243 370 242 403C241 433 253 455 270 465.500" />
        <path d="M358 310C375 322 384 345 383.500 367C383 390 376 411 368 424" />
        <path d="M415 539.500C398 527 390 500 390.500 472C391 405 440 346.500 485 346.500C512 347 530 377 530 413C530 440 522 465 512.500 484" />
        <path d="M466 277L472 433" />
      </g>
      <path d="M260 108L262.500 289C262 303 285 312.500 320 312.500C365 312 415 302 452 283C475 272 490 260 490.500 247L484 108z" fill="url(#body)" />
      <path d="M260.700 174C261 183 275 187.500 303 187.500C350 187 405 172 447 156C470 146 484 136 485.500 126" fill="none" stroke="#1c3566" />
      <path d="M262.500 289C262 303 285 312.500 320 312.500C365 312 415 302 452 283C475 272 490 260 490.500 247" fill="none" stroke="#c50fd0" strokeWidth="1.5" />
      <path d="M276.500 108L280 307L284 525M445.300 108L452 283" fill="none" stroke="#030308" strokeWidth="2" />
      <g fill="#ffffff60" stroke="#7d8aa4" strokeWidth="0.9">
        <ellipse cx="545.500" cy="316.500" rx="8.500" ry="3" />
        <ellipse cx="545.500" cy="316.500" rx="3" ry="8.500" />
      </g>
      <path d="M66.500 523.500V505" stroke="#3c3cc0" />
      <path d="M66.500 523.500L81 518" stroke="#30d860" />
      <path d="M66.500 523.500L82 528" stroke="#c02844" />
      <g className="font-['DejaVu_Sans',sans-serif]" fontSize="9" fontWeight="700" textAnchor="middle">
        <text x="69" y="504" fill="#2828e0">Z</text>
        <text x="84" y="518" fill="#28e850">y</text>
        <text x="86.500" y="530" fill="#d81c30">x</text>
      </g>
    </svg>
  );
};

const Viewport = () => (
  <main className="relative min-w-0 flex-1 overflow-hidden border-b border-l border-[#a4adbb]">
    <Scene />
    <div className="absolute top-0 left-0 flex h-3 items-center bg-[#0c90d6] text-[#06202f]">
      <button type="button" className="pr-1.5 pl-1 font-semibold">透视图</button>
      <button type="button" aria-label="Viewport menu" className="flex h-3 w-[7px] items-center justify-center border-l border-[#06507c]">
        <Icon className="h-1 w-1" shapes={[['#06202f', N, 'M0 2h16L8 14z']]} />
      </button>
    </div>
  </main>
);

const Bulb = ({ on }: { on?: boolean }) => (
  <Icon className="mx-auto h-2 w-2" shapes={[[on ? '#fbf09a' : '#6c9ce4', on ? '#8a7a1c' : '#2c4c84', 'M8 1a5 5 0 0 1 3 9l-1 5H6l-1-5a5 5 0 0 1 3-9z', 1.3]]} />
);

const Lock = ({ closed }: { closed?: boolean }) => (
  <Icon className="mx-auto h-2 w-2" shapes={closed
    ? [['#6c9ce4', '#223c70', 'M2 7h12v8H2z', 1.5], [N, '#333', 'M5 7V2h6v5', 1.8]]
    : [['#f4d850', '#6c5808', 'M1 7h9v8H1z', 1.5], [N, '#333', 'M9 7V2h5v5', 1.8]]}
  />
);

const LayerPanel = () => (
  <aside className="flex min-w-0 flex-1 flex-col border border-[#bfc4cd] bg-white">
    <div className="flex h-[22px] items-center justify-between pl-1">
      {layerTools.map((g) => <ToolButton key={g.name} glyph={g} className="h-2.5 w-2.5" />)}
    </div>
    <table className="w-full table-fixed border-collapse text-neutral-800">
      <colgroup>
        <col />
        <col className="w-2.5" />
        <col className="w-2.5" />
        <col className="w-2.5" />
        <col className="w-2.5" />
        <col className="w-[17px]" />
      </colgroup>
      <thead>
        <tr className="h-3 text-left">
          <th className="pl-0.5 font-normal">图层</th>
          <th className="border-x border-neutral-100" />
          <th className="border-r border-neutral-100" />
          <th className="border-r border-neutral-100" />
          <th className="border-r border-neutral-100" />
          <th className="pl-0.5 font-normal whitespace-nowrap">材质</th>
        </tr>
      </thead>
      <tbody>
        {layers.map((l) => (
          <tr key={l.name} className={clsx('h-3 border-b border-[#ecedf0]', l.selected && 'bg-[#869ee8]')}>
            <td className={clsx('pl-1 whitespace-nowrap', l.current && 'font-bold')}>{l.name}</td>
            <td>{l.current && <Check className="mx-auto block h-2 w-2" strokeWidth={3} />}</td>
            <td>{!l.current && <Bulb on={l.on} />}</td>
            <td>{!l.current && <Lock closed={l.locked} />}</td>
            <td><span className="mx-auto block h-[7px] w-[7px] border border-black/50" style={{ backgroundColor: l.color }} /></td>
            <td>
              <span className={clsx('ml-0.5 block rounded-full', l.selected ? 'h-[9px] w-[9px] bg-white' : 'h-[7px] w-[7px] bg-neutral-50')} />
            </td>
          </tr>
        ))}
      </tbody>
    </table>
    <div className="mt-auto h-2 bg-[#f0f0f0] pt-[3px] pl-2.5">
      <div className="h-px w-[45px] bg-neutral-500" />
    </div>
  </aside>
);

const SideTabs = () => (
  <div className="flex w-[17px] flex-col">
    {sideTabs.map((t, i) => {
      const last = i === sideTabs.length - 1;
      return (
        <button key={t.name} type="button" className={clsx('relative w-full', last ? 'h-[45px] shrink-0' : 'min-h-0 flex-1')}>
          <svg viewBox="0 0 17 46" preserveAspectRatio="none" className="absolute top-0 left-0 h-[46px] w-[17px]">
            <path d={i === 0 || last ? 'M0 0H16.500V27L0 45z' : 'M0 11L8 .500H16.500V27L0 45z'} fill="#fff" stroke="#c3c7cf" />
          </svg>
          <span className="absolute inset-x-0 top-[3px] flex flex-col items-center gap-px text-neutral-800">
            <Icon className="h-[9px] w-[9px]" shapes={t.shapes} />
            <span className="leading-2 whitespace-nowrap [writing-mode:vertical-rl]">{t.name}</span>
          </span>
        </button>
      );
    })}
  </div>
);

const Snap = ({ name, on, plain }: { name: string; on?: boolean; plain?: boolean }) => (
  <label className="flex items-center gap-0.5 whitespace-nowrap">
    <span className="relative block h-[7px] w-[7px]">
      <input
        type="checkbox"
        defaultChecked={on}
        className={clsx('peer block h-[7px] w-[7px] appearance-none rounded-[2px] border bg-white checked:border-[#0a5cad] checked:bg-[#0a5cad]', plain ? 'border-neutral-100' : 'border-neutral-500')}
      />
      <Check className="pointer-events-none absolute top-px left-px hidden h-[5px] w-[5px] text-white peer-checked:block" strokeWidth={4} />
    </span>
    {name}
  </label>
);

const OsnapBar = () => (
  <div className="flex h-[22px] items-center border-b border-[#c3c8d0] pt-px pl-[5px] text-neutral-800">
    <div className="flex w-[342px] items-center justify-between">
      {osnaps.map((o) => <Snap key={o.name} {...o} />)}
    </div>
    <div className="ml-3"><Snap name="停用" plain /></div>
  </div>
);

const StatusBar = () => (
  <footer className="flex h-2.5 items-center text-neutral-800">
    <span className="w-[35px] border-r border-[#b4b9c2] pl-0.5">工作平面</span>
    <span className="w-12 border-r border-[#b4b9c2] pl-[5px]">x -366.743</span>
    <span className="w-[50px] border-r border-[#b4b9c2] pl-[5px]">y 1292.729</span>
    <span className="w-[50px] border-r border-[#b4b9c2] text-center">z 0.000</span>
    <span className="w-[50px] border-r border-[#b4b9c2] text-center">毫米</span>
    <span className="flex w-[139px] items-center gap-px border-r border-[#b4b9c2] pl-px">
      <span className="h-2 w-2 bg-black" />
      默认
    </span>
    {toggles.map((t) => (
      <button key={t.name} type="button" className={clsx('h-2.5 border-r border-[#b4b9c2] px-[3px] whitespace-nowrap', t.on && 'bg-[#e3f0f8] font-bold')}>{t.name}</button>
    ))}
    <span className="pl-px whitespace-nowrap">绝对公差: 0.01</span>
  </footer>
);

export default function App() {
  return (
    <div className="flex h-screen flex-col overflow-hidden bg-[#dfe3ea] font-['DejaVu_Sans','Noto_Sans_CJK_SC',sans-serif] text-[7px] leading-[10px]">
      <TitleBar />
      <MenuBar />
      <CommandArea />
      <ToolTabs />
      <div className="flex h-5 items-center overflow-hidden bg-linear-to-b from-[#f3f5f8] to-[#dde1e8] pb-px pl-[5px]">
        <ToolGroup glyphs={mainTools} className="w-[423px]" />
        <ToolGroup glyphs={solidTools} className="ml-[3px] w-[360px]" />
        <ToolGroup glyphs={panelTools} className="ml-0.5 w-[158px] border-l border-neutral-300 pl-0.5" />
        <ToolGroup glyphs={extraTools} className="ml-1 w-[62px] border-l border-neutral-300 pl-px" />
      </div>
      <div className="flex min-h-0 flex-1 pt-0.5">
        <div className="flex w-[39px] shrink-0 flex-col pt-0.5 pb-3">
          <div className="mb-px ml-0.5 h-0.5 w-[33px] bg-[#c9cfd9]" />
          <div className="grid min-h-0 w-8 flex-1 grid-cols-2 content-between justify-items-center">
            {sideTools.map((g) => <ToolButton key={g.name} glyph={g} className="h-[13px] w-[13px]" />)}
            <button type="button" className="w-3.5 text-[9px] font-bold text-neutral-800">»</button>
          </div>
        </div>
        <Viewport />
        <div className="flex w-[151px] shrink-0 pt-[5px] pr-px pl-1">
          <LayerPanel />
          <SideTabs />
        </div>
      </div>
      <OsnapBar />
      <StatusBar />
    </div>
  );
}
